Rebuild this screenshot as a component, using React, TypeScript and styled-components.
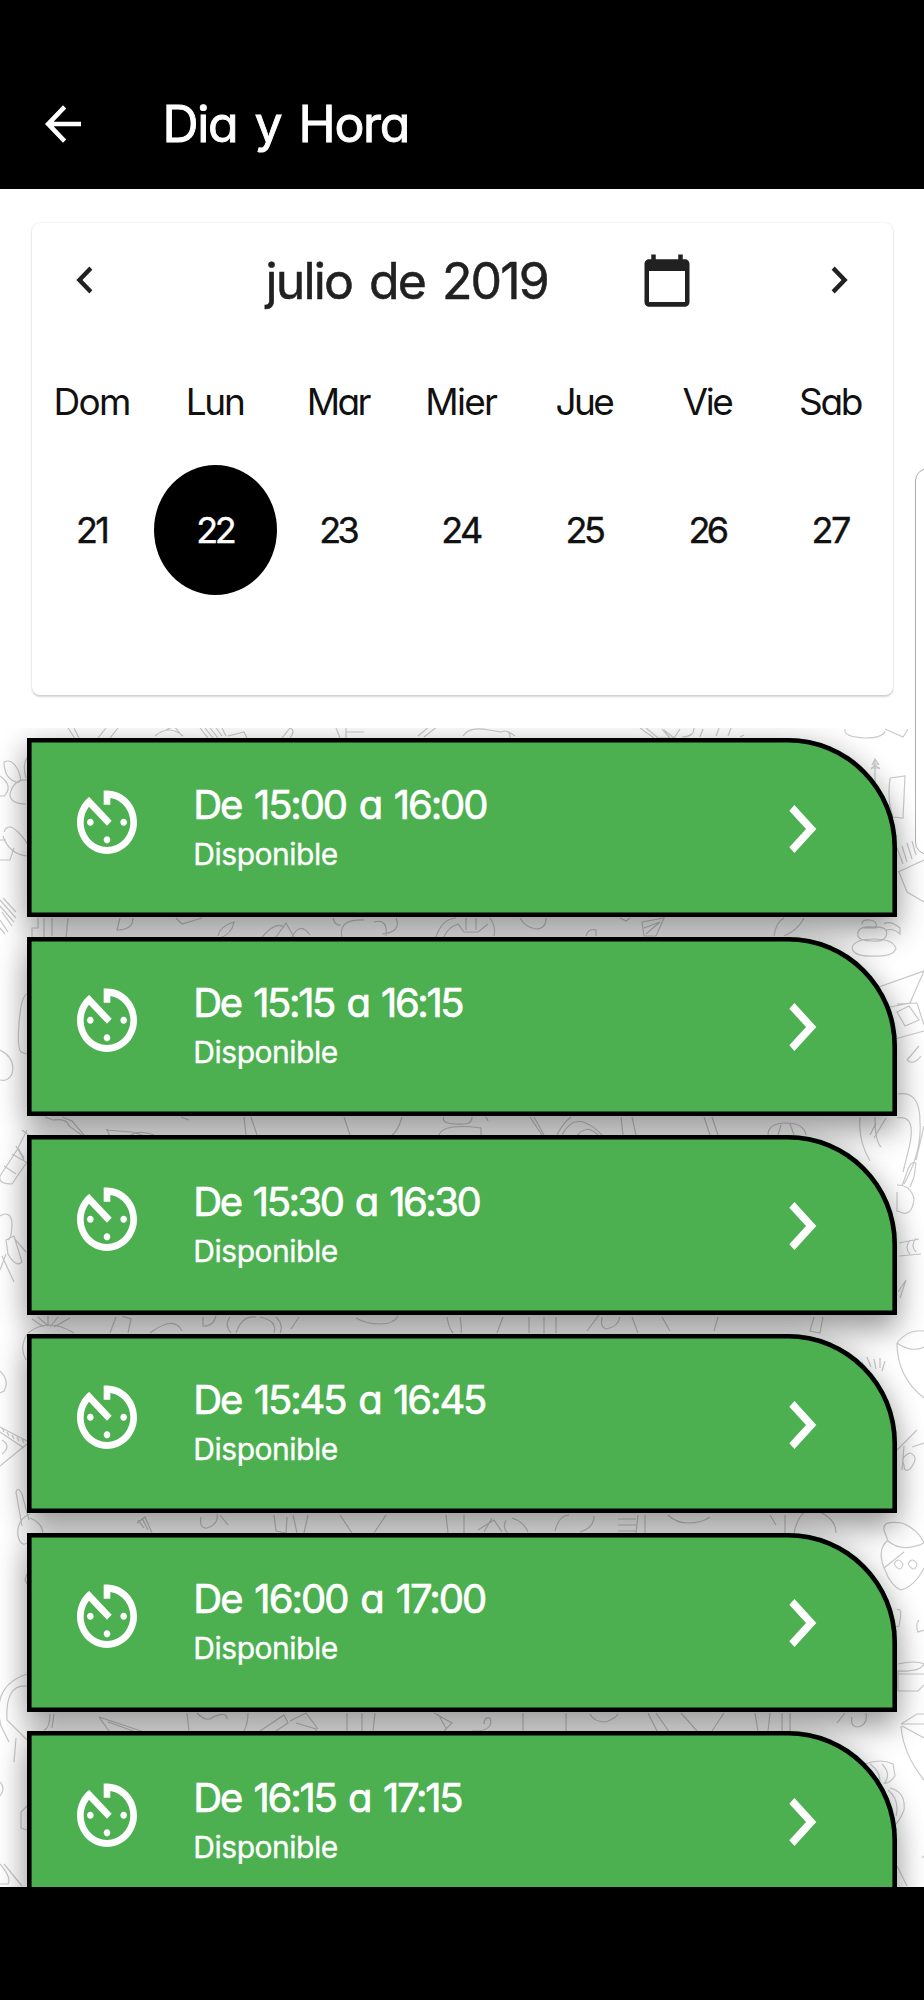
import React, { useLayoutEffect, useRef, useState } from "react";
import styled, { createGlobalStyle } from "styled-components";

const GlobalStyle = createGlobalStyle`
  * { box-sizing: border-box; }
  body { margin: 0; background: #fff; }
`;

const Screen = styled.div`
  position: relative;
  width: 924px;
  height: 2000px;
  display: flex;
  flex-direction: column;
  overflow: hidden;
  background: #fff;
  font-family: Inter, "Liberation Sans", sans-serif;
  font-feature-settings: "cv11" 1;
`;

const AppBar = styled.header`
  flex: none;
  height: 188.5px;
  padding: 59px 0 0 36px;
  display: flex;
  align-items: center;
  background: #000;
  color: #fff;
`;

const Glyph = styled.svg<{ $w: number; $h: number }>`
  flex: none;
  display: block;
  width: ${(p) => p.$w}px;
  height: ${(p) => p.$h}px;
  fill: currentColor;
`;

const Line = styled.span<{ $size: number; $height: number; $stroke: number }>`
  display: block;
  width: max-content;
  white-space: pre;
  font-size: ${(p) => p.$size}px;
  line-height: ${(p) => p.$height}px;
  font-weight: 400;
  word-spacing: 0.09em;
  -webkit-text-stroke: ${(p) => p.$stroke}px currentColor;
`;

const TitleSlot = styled.div`
  margin-left: 72.5px;
`;

const CalendarCard = styled.section`
  flex: none;
  margin: 34px 31.5px 0 32px;
  height: 472.5px;
  border-radius: 8px;
  background: #fff;
  box-shadow: 0 2px 2px rgba(0, 0, 0, 0.16), 0 0 2px rgba(0, 0, 0, 0.14);
  color: #212121;
`;

const MonthRow = styled.div`
  height: 115px;
  padding: 0 28px 0 27px;
  display: flex;
  align-items: center;
`;

const MonthSlot = styled.div`
  width: 374px;
  padding-top: 1px;
  margin-left: 154.5px;
`;

const NextSlot = styled.div`
  margin-left: auto;
`;

const WeekGrid = styled.div<{ $height: number; $top?: number }>`
  height: ${(p) => p.$height}px;
  padding-top: ${(p) => p.$top ?? 0}px;
  margin-left: -1px;
  display: grid;
  grid-template-columns: repeat(7, 123.1px);
`;

const Cell = styled.div<{ $selected?: boolean }>`
  display: flex;
  align-items: center;
  justify-content: center;
  padding-right: 2px;
  border-radius: 50%;
  background: ${(p) => (p.$selected ? "#000" : "transparent")};
  color: ${(p) => (p.$selected ? "#fff" : "#111")};
`;

const SlotArea = styled.main`
  position: relative;
  isolation: isolate;
  flex: none;
  margin-top: 33px;
  height: 1158.8px;
  padding: 10px 27px 0;
  overflow: hidden;
`;

const Doodles = styled.svg`
  position: absolute;
  inset: 0;
  z-index: -2;
  width: 924px;
  height: 1159px;
  fill: none;
  stroke: #cacaca;
  stroke-width: 1.2;
`;

const SlotTile = styled.article`
  position: relative;
  height: 179.3px;
  margin-bottom: 19.35px;
  padding: 41.5px 51.8px 0 40px;
  display: flex;
  align-items: flex-start;
  border-radius: 0 109px 0 0;
  background: #4caf50;
  box-shadow: inset 0 0 0 4.6px #000;
  color: #fff;

  &::before {
    content: "";
    position: absolute;
    inset: 0;
    z-index: -1;
    border-radius: inherit;
    box-shadow: 0 17px 30px rgba(0, 0, 0, 0.3), 0 3px 30px rgba(0, 0, 0, 0.18);
  }
`;

const SlotText = styled.div`
  flex: 1;
  margin-left: 46.3px;
`;

const ChevronSlot = styled.div`
  padding-top: 1.2px;
`;

const SystemBar = styled.footer`
  flex: 1;
  background: #000;
`;

const EdgePanel = styled.div`
  position: absolute;
  left: 915px;
  top: 468px;
  width: 30px;
  height: 387px;
  border: 1.5px solid #adadad;
  border-radius: 13px;
  background: rgba(255, 255, 255, 0.75);
`;

type SpacedProps = {
  text: string;
  width: number;
  size: number;
  height: number;
  stroke?: number;
};

/* Tracks the letters out (or in) so that the line takes the given width. */
function SpacedText({ text, width, size, height, stroke = 0 }: SpacedProps) {
  const ref = useRef<HTMLSpanElement>(null);
  const [spacing, setSpacing] = useState(0);
  useLayoutEffect(() => {
    if (ref.current) {
      const natural = ref.current.getBoundingClientRect().width - spacing * text.length;
      setSpacing((width - natural) / text.length);
    }
  }, [text, width, size]);
  return (
    <Line ref={ref} $size={size} $height={height} $stroke={stroke} style={{ letterSpacing: spacing }}>
      {text}
    </Line>
  );
}

function Icon({ d, w, h }: { d: string; w: number; h: number }) {
  return (
    <Glyph viewBox="0 0 24 24" preserveAspectRatio="none" $w={w} $h={h} aria-hidden>
      <path d={d} />
    </Glyph>
  );
}

const BACK = "M20 11H7.83l5.59-5.59L12 4l-8 8 8 8 1.41-1.41L7.83 13H20v-2z";
const LEFT = "M15.41 7.41L14 6l-6 6 6 6 1.41-1.41L10.83 12z";
const RIGHT = "M10 6L8.59 7.41 13.17 12l-4.58 4.59L10 18l6-6z";
const CALENDAR =
  "M20 3h-1V1h-2v2H7V1H5v2H4c-1.1 0-2 .9-2 2v16c0 1.1.9 2 2 2h16c1.1 0 2-.9 2-2V5c0-1.1-.9-2-2-2zm0 18H4V8h16v13z";
const TIMER =
  "M11 17c0 .55.45 1 1 1s1-.45 1-1-.45-1-1-1-1 .45-1 1zm0-14v4h2V5.08c3.39.49 6 3.39 6 6.92 0 3.87-3.13 7-7 7s-7-3.13-7-7c0-1.68.59-3.22 1.58-4.42L12 13l1.41-1.41-6.8-6.8v.02C4.42 6.45 3 9.05 3 12c0 4.97 4.02 9 9 9 4.97 0 9-4.03 9-9s-4.03-9-9-9h-1zm7 9c0-.55-.45-1-1-1s-1 .45-1 1 .45 1 1 1 1-.45 1-1zM6 12c0 .55.45 1 1 1s1-.45 1-1-.45-1-1-1-1 .45-1 1z";

const weekdays: [string, number][] = [
  ["Dom", 76],
  ["Lun", 58],
  ["Mar", 62],
  ["Mier", 71],
  ["Jue", 57],
  ["Vie", 49],
  ["Sab", 62],
];
const days: [string, number][] = [
  ["21", 31],
  ["22", 37],
  ["23", 37],
  ["24", 39],
  ["25", 37],
  ["26", 37],
  ["27", 37],
];
const slots: [string, number][] = [
  ["De 15:00 a 16:00", 293],
  ["De 15:15 a 16:15", 269],
  ["De 15:30 a 16:30", 286],
  ["De 15:45 a 16:45", 292],
  ["De 16:00 a 17:00", 292],
  ["De 16:15 a 17:15", 268],
];

/* Pet-grooming and beauty sketches, in screen coordinates. */
const doodles = [
  // strip above the first slot
  "M68 728l8 12M74 728l6 12M98 738l8-10M110 738l8-10M155 736q14-12 28 0M166 730l8-4 8 10",
  "M200 728l8 10M205 728l8 10M210 728l8 10M216 728l6 8M222 728l4 8M228 736l16-4 4 8",
  "M282 738l8-10q6 2 0 10M336 728l4 10M346 728v10M346 732h18M418 736l12-10M424 737l14-11M463 736q6-10 26-6l12 2q10-4 9 8",
  "M509 732l6 4M640 728l14 10M646 728l12 10h12l-8-9M664 730l10 8 6-9M682 737q12 0 12-9M700 737l3-8M716 736l3-8M728 736l3-8M740 737l4-2",
  "M845 729q-2 8 20 9q18 0 20-7M885 729l18 8 5-8",
  // left margin
  "M4 762q8-4 14 8q6 14-2 12q-12-4-12-20M28 756q-6 8-2 22M0 776q14 10 4 20H0M10 794q4-16 18-14M10 794q0 10 16 10",
  "M4 832q4-10 14 0q10 10 12 18M3 836q6 18 24 20M0 840h6M0 860h10l4-12",
  "M0 900l16 18M0 906l14 16M2 912l10 14M0 920l8 12M0 928l5 6M3 898l13 14",
  "M27 994q-6 2-8 30q-2 24 2 28l6 2M0 1050q16 8 12 24q-4 8-12 6",
  "M27 1130l-10 20-17 26q-2 8 12 8l15-22M22 1130l8 6M4 1166l12 8M12 1154l14 8M16 1146l8 14M18 1148l6 10",
  "M0 1216q10-6 12 6q0 16-4 18M6 1240l8-4 8 26q-6 6-14-8zM14 1238l12 14M2 1256l12 26M0 1270l6-16",
  "M27 1334q-8 14-1 26M0 1371q10 10 4 20l-4 2M0 1427l27 14M0 1432l24 16M27 1444l-27 22M2 1440q10 6 0 14",
  "M2 1428l2 4m3 0l2 4m3-1l2 4m3-2l2 4m3-2l2 4",
  "M22 1526l-6-34q2-6 6 2l7 26M30 1514q-14 6-12 22q4 14 12 4M30 1518q16 6 12 22",
  "M27 1574l-2 6 2 4M27 1674q-36 12-26 52l8 16M27 1686q-22-2-20 34l20 20M16 1738l-2 24M0 1782q6 6 0 14M27 1806l-6 6v16l6 2M0 1864q12 14 8 20H0M4 1864l18 22",
  // gap under slot one
  "M38 918v10h-6v10M44 918v20M52 918v18M68 918l-2 20M120 918l-3 12q16 0 16-12M176 918l6 6 20-6M218 936q2-10 16-14q-2 12-14 16M262 937q14-16 22-10M276 937l10-14 8 14M292 937q8-16 18-2",
  "M333 918q2 8 8 7M342 937q-4-18 22-17M374 922q14-4 12 14M382 934q20-2 14-16M436 937q6-18 20-19M444 937q4-10 14-13l6 8h14l10-8M466 918v12M476 918v12M490 918q6 8 4 18M520 918q6 10 16 11q10 0 10-11",
  "M586 936q2-8 10-6v6M620 918l6 3 4-3M642 922l22-4-8 18h-12zM644 928l16-6M646 934l14-12M774 936q2-14 10-18M784 936q14-6 20-18",
  // gap under slot two
  "M45 1117l8 3q14-2 16 6l14 10M62 1117l10 4 12 14M106 1130l26 2 20 6M110 1137l-3-8M128 1137q10-8 26-2M181 1117l8 3M244 1117l2 18M251 1117l6 18M344 1117l6 18M402 1117q-4 14-10 18M444 1117q-4 8 20 7q8 0 8-7M439 1135q4-12 42-7v7",
  "M486 1117l2 4M530 1117l12 18M534 1117l10 18M557 1135q6-12 14-18M562 1135q14-28 42 2M576 1137q10-14 22-2M621 1117l2 18M632 1117l4 18M704 1117l6 18M712 1117l6 18M768 1135q0-12 18-12q18 0 20 12M778 1135l3-10M794 1135l-4-11",
  // gap under slot three
  "M32 1319l12 8M38 1317l10 9M48 1316v10M58 1317l-8 10M70 1318l-16 9M28 1333q20-16 46 0M116 1317l-6 16M122 1316l9 3-3 14M150 1333q24-18 32-2M203 1317v9q10 1 13-10M230 1317q-6 8 1 16M236 1333q6-18 20-16M260 1317q18 4 14 16M276 1317q8 8 4 16M299 1317l-8 12",
  "M356 1318q10 6 24 6q14 0 18-8M447 1317q2 12 6 16M460 1317q2 12 1 16M503 1317l-6 16M529 1317v16M544 1317v16M556 1317v16M587 1331l12-16M602 1317q-2 10 4 12q12-2 14-12M632 1317l6 16M662 1317l8 14M718 1317l-4 14M814 1317l-4 14 10 2 3-16",
  // gap under slot four
  "M137 1523l8-6 7 16M138 1520l6 8M142 1518l6 12M201 1517q-2 12 6 11q12-4 10-14M220 1515l8 10M274 1515l2 16 10 2 1-16M293 1515l4 18M308 1515l-4 18M340 1515l12 18M386 1515l-12 18M446 1515l2 18",
  "M464 1515v18M478 1530l16-10 8 12M484 1532l8-14M506 1520q-4 8 2 13M512 1518q12 4 16 14M555 1531q4-16 14-16M594 1516q0 12-14 16M618 1519h18M618 1525h18M618 1531h18M638 1515l-2 18M645 1515v18M668 1515q8 8 20 8q14 0 22-6M770 1515l6 10M785 1515v18M794 1533q8-36 34-16q8 6 8 16",
  // gap under slot five
  "M50 1714q0 14-6 16M54 1714l-2 14M99 1717l48 16M99 1717l10 14M108 1722l28 10M187 1713l2 18M197 1713q10 10 16 4q14-6 14 2M248 1713q0 10-4 18M260 1731l24-16 4 8-12 8M290 1721l16-8 12 16M296 1723l20 6v4M347 1713v20M362 1713v18M375 1713l-2 18M434 1713l18 10-8 8M438 1714l8 14",
  "M484 1724q0-7 6-6q4 10-10 13h-8M523 1713v18M566 1713v20M590 1714q4 8 16 8q10-4 12-8M648 1713l10 20M656 1713l14 20M681 1713l16 18M724 1713l-12 18M755 1713l3 18M770 1713l-2 18M782 1713v18M790 1713v18M837 1723l8-10M852 1717q-2 10 6 10q10-2 8-14",
  // right margin
  "M875 760v44M872 765l3-6 4 6M871 769l4-4 5 4M872 764h7M871 768h9M890 778l15-2-2 42-10-1q-6-16-3-39M897 848l6 16M902 846l5 16M907 843l5 16M912 841l4 14M898 872l26-12M899 872l8 20 17 10",
  "M862 924q0-5 8-4t6 8h-12M858 936q-2-10 14-9q18-1 14 9-2 6-14 5-12 0-14-5M852 948q2-9 22-9q20 0 22 10q-4 8-22 7-20 1-22-8M884 924q6-4 16 4v6q-6-6-14-4M876 988l48-17-14 32-30 6M897 1004l20-1 7 22M897 1012l12-6 10 14-14 6zM895 1039l29-8M907 1060l12-14M907 1060q6 6 14-4",
  "M860 1117q-2 24 10 44M875 1117q0 24 6 30M870 1135l6-12M874 1138l12-20M898 1094q22-4 22 28q2 30-16 62M897 1118q20-4 12 30l-6 24M924 1126l-8 34M902 1186l5-14q4-12 9-9l-2 14-4 10M897 1185q14 0 17 14q-2 20-16 12M897 1212v-20M899 1243l20-4M899 1256l22-2M910 1240q-6 8 0 14M916 1238q-6 8 0 14M898 1292l8-12-6 18",
  "M897 1343q10-14 27-12M897 1343q14 10 27 4M897 1343q0 34 27 55M862 1362l4 8M867 1357l4 10M874 1359l2 10M880 1358v10M885 1361l-3 10M897 1450l20-20M904 1465q-4-8 6-12q10 4 0 16-6 4-6-4M902 1470l2-24M912 1447l12-4",
  "M884 1530q-2-10 18-7q16 6 22 20q-22 10-36-2zM888 1540q-12 10-3 30q6 16 16 20q14-4 23-22M884 1568l20-16M894 1564q4-8 9 0q-2 10-9 0M908 1564q4-8 9 0q-2 10-9 0M897 1610q6-4 2 16l-6 2M919 1620q-4 4-1 12l6-2M898 1664q18-4 26 0q-4 8-26 7v20h20l6-6M898 1674h26",
  "M901 1724l16-10h7M901 1724h23M902 1726l22 12M901 1726q2 28 23 54M865 1764q16-6 28 0l2 12q-6 8-10 7M870 1764q14 10 8 24M882 1764q10 10 2 20M890 1788q16 4 14 22q-4 10-8 14M888 1790q12 10 8 26M897 1866l10 20M924 1856l-2 2",
];

export default function App() {
  return (
    <Screen>
      <GlobalStyle />
      <AppBar>
        <Icon d={BACK} w={54} h={56} />
        <TitleSlot>
          <SpacedText text="Dia y Hora" width={246.5} size={50} height={60} stroke={0.9} />
        </TitleSlot>
      </AppBar>

      <CalendarCard>
        <MonthRow>
          <Icon d={LEFT} w={52} h={54} />
          <MonthSlot>
            <SpacedText text="julio de 2019" width={282.5} size={50} height={60} stroke={0.5} />
          </MonthSlot>
          <Icon d={CALENDAR} w={54} h={57} />
          <NextSlot>
            <Icon d={RIGHT} w={52} h={54} />
          </NextSlot>
        </MonthRow>
        <WeekGrid $height={127.5} $top={2}>
          {weekdays.map(([name, width]) => (
            <Cell key={name}>
              <SpacedText text={name} width={width} size={37} height={44} />
            </Cell>
          ))}
        </WeekGrid>
        <WeekGrid $height={130}>
          {days.map(([day, width]) => (
            <Cell key={day} $selected={day === "22"}>
              <SpacedText text={day} width={width} size={36} height={44} stroke={0.4} />
            </Cell>
          ))}
        </WeekGrid>
      </CalendarCard>

      <SlotArea>
        <Doodles viewBox="0 728 924 1159" aria-hidden>
          {doodles.map((d) => (
            <path key={d} d={d} />
          ))}
        </Doodles>
        {slots.map(([label, width]) => (
          <SlotTile key={label}>
            <Icon d={TIMER} w={80} h={84.5} />
            <SlotText>
              <SpacedText text={label} width={width} size={40} height={50} stroke={0.7} />
              <SpacedText text="Disponible" width={144.5} size={30} height={48} stroke={0.35} />
            </SlotText>
            <ChevronSlot>
              <Icon d={RIGHT} w={87.5} h={96} />
            </ChevronSlot>
          </SlotTile>
        ))}
      </SlotArea>

      <SystemBar />
      <EdgePanel />
    </Screen>
  );
}
